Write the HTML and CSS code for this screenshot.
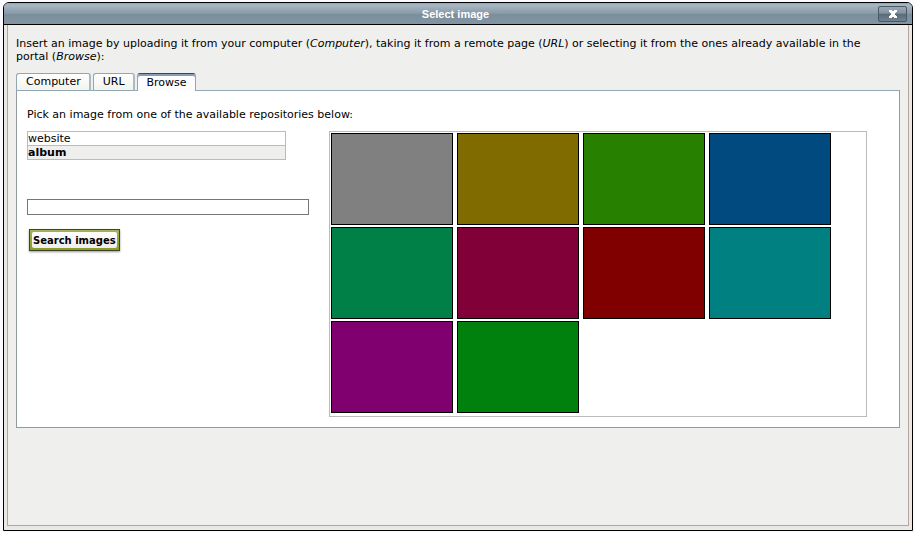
FILE: index.html
```html
<!DOCTYPE html>
<html lang="en">
<head>
<meta charset="utf-8">
<title>Select image</title>
<link rel="stylesheet" href="styles.css">
</head>
<body>
<section class="dialog" role="dialog" aria-labelledby="dialog-title">
  <header class="titlebar">
    <h1 class="title" id="dialog-title">Select image</h1>
    <button class="close" type="button" aria-label="Close">
      <svg width="10" height="8" viewBox="0 0 10 8" aria-hidden="true"><path d="M1 0h3v1h2V0h3v2H8v1H7v2h1v1h1v2H6V7H4v1H1V6h1V5h1V3H2V2H1z" fill="#fff"/></svg>
    </button>
  </header>
  <main class="frame">
    <p class="intro">Insert an image by uploading it from your computer (<em>Computer</em>), taking it from a remote page (<em>URL</em>) or selecting it from the ones already available in the portal (<em>Browse</em>):</p>
    <div class="tabs" role="tablist">
      <button class="tab" type="button" role="tab">Computer</button>
      <button class="tab" type="button" role="tab">URL</button>
      <button class="tab active" type="button" role="tab" aria-selected="true">Browse</button>
    </div>
    <div class="panel" role="tabpanel">
      <p class="hint">Pick an image from one of the available repositories below:</p>
      <div class="columns">
        <form class="side">
          <ul class="repositories">
            <li class="repository">website</li>
            <li class="repository selected">album</li>
          </ul>
          <input class="query" type="text" aria-label="Search images">
          <button class="search" type="button"><span class="search-label">Search images</span></button>
        </form>
        <div class="gallery">
          <div class="thumb gray"></div>
          <div class="thumb olive"></div>
          <div class="thumb leaf"></div>
          <div class="thumb blue"></div>
          <div class="thumb emerald"></div>
          <div class="thumb wine"></div>
          <div class="thumb red"></div>
          <div class="thumb teal"></div>
          <div class="thumb purple"></div>
          <div class="thumb green"></div>
        </div>
      </div>
    </div>
  </main>
</section>
</body>
</html>
```
FILE: styles.css
```css
* { box-sizing: border-box; }

body {
  margin: 0;
  min-height: 100vh;
  padding: 2px 2px 2px 3px;
  display: flex;
  background: #fbfbff;
  color: #000;
  font: 11px/13px "DejaVu Sans", Verdana, sans-serif;
}

p, h1, ul { margin: 0; padding: 0; }

button, input { font: inherit; color: inherit; }

.dialog {
  flex: 1;
  display: flex;
  flex-direction: column;
  border: 1px solid #000;
  border-radius: 6px 6px 0 0;
  background: #ebe7e3;
  overflow: hidden;
}

.titlebar {
  display: grid;
  grid-template-columns: 1fr auto 1fr;
  align-items: center;
  height: 22px;
  padding-right: 5px;
  border-bottom: 1px solid #000;
  background: linear-gradient(#94a5b2, #a8b7c3 10%, #8899a7 50%, #7b8e9c 55%, #8395a2);
}

.title {
  grid-column: 2;
  padding-top: 2px;
  color: #fff;
  font: bold 11px/13px "Liberation Sans", Arial, sans-serif;
}

.close {
  justify-self: end;
  display: flex;
  align-items: center;
  justify-content: center;
  width: 29px;
  height: 16px;
  padding: 0;
  border: 1px solid #4b5965;
  border-radius: 2px;
  background: linear-gradient(#9aa9b5, #8292a0 45%, #596a79 50%, #718391);
}

.frame {
  flex: 1;
  margin: 0 3px 4px;
  padding: 12px 8px;
  border: 1px solid #b4a69c;
  border-top: 0;
  background: #efefed;
}

.intro { padding-right: 8px; }

.tabs {
  display: flex;
  align-items: flex-end;
  gap: 2px;
  margin: 10px 0 -1px;
}

.tab {
  height: 18px;
  padding: 0 8px 0 9px;
  border: 1px solid #91a7b4;
  border-right: 2px solid #a9bbc5;
  border-bottom-color: #91a7b4;
  border-radius: 3px 3px 0 0;
  background: linear-gradient(#fff, #f3f3ec);
  line-height: 16px;
}

.tab.active {
  position: relative;
  border-width: 1px 1px 0;
  border-top-color: #33495e;
  border-right-color: #91a7b4;
  background: #fcfcfe;
  box-shadow: inset 0 2px #8a9bb4;
}

.panel {
  padding: 17px 32px 10px 10px;
  border: 1px solid #919b9c;
  border-top-color: #91a7b4;
  background: #fff;
}

.columns {
  display: flex;
  gap: 20px;
  margin-top: 10px;
}

.side {
  flex: 0 0 282px;
  display: flex;
  flex-direction: column;
  align-items: flex-start;
}

.repositories {
  width: 259px;
  border: 1px solid #bbb;
  list-style: none;
}

.repository.selected {
  border-top: 1px solid #bbb;
  background: #efefed;
  font-weight: bold;
}

.query {
  width: 100%;
  height: 16px;
  margin-top: 39px;
  padding: 0 2px;
  border: 1px solid #777;
  background: #fff;
}

.search {
  height: 22px;
  margin: 14px 2px 0;
  padding: 2px;
  border: 1px solid #41442d;
  background: linear-gradient(#a5b25b, #899d25);
  box-shadow: 0 1px 2px #999;
  font: bold 10px/14px "DejaVu Sans", Verdana, sans-serif;
}

.search-label {
  display: block;
  padding: 2px 1px 0;
  border-radius: 2px;
  background: linear-gradient(#fff, #eee);
}

.gallery {
  flex: 1;
  display: flex;
  flex-wrap: wrap;
  align-content: flex-start;
  gap: 2px 4px;
  padding: 1px 1px 3px;
  border: 1px solid #bbb;
}

.thumb { width: 122px; height: 92px; border: 1px solid #000; }

.gray { background: #808080; }
.olive { background: #806b00; }
.leaf { background: #278000; }
.blue { background: #004a80; }
.emerald { background: #008046; }
.wine { background: #800037; }
.red { background: #800000; }
.teal { background: #008080; }
.purple { background: #800070; }
.green { background: #00800d; }
```
